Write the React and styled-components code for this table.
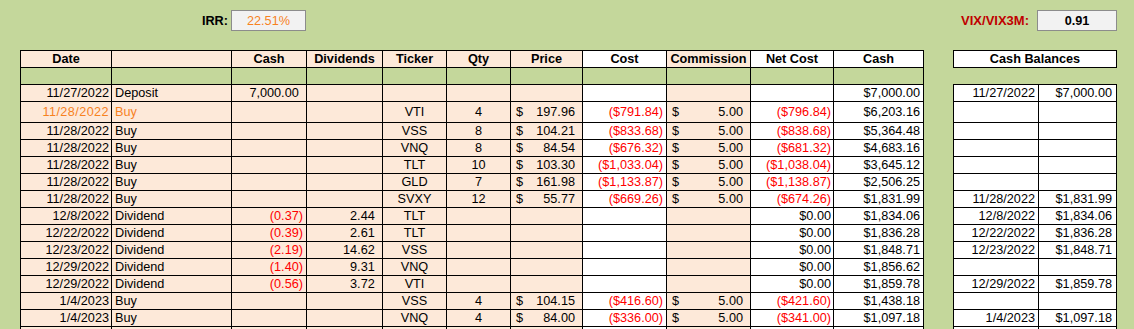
import React from 'react';
import styled, { createGlobalStyle } from 'styled-components';

const GREEN = '#C4D79B';
const PEACH = '#FDE9D9';
const RED = '#FF0000';
const ORANGE = '#F7821F';

const fills = { peach: PEACH, white: '#FFFFFF', green: GREEN };

const columns = [
  { key: 'date', w: 91, fill: 'peach', align: 'right', pr: 2, title: 'Date' },
  { key: 'type', w: 120, fill: 'peach', align: 'left', pl: 3, title: '' },
  { key: 'cash', w: 75, fill: 'peach', align: 'right', pr: 3, paren: true, title: 'Cash' },
  { key: 'div', w: 76, fill: 'peach', align: 'right', pr: 3, paren: true, title: 'Dividends' },
  { key: 'ticker', w: 64, fill: 'peach', align: 'center', title: 'Ticker' },
  { key: 'qty', w: 64, fill: 'peach', align: 'center', title: 'Qty' },
  { key: 'price', w: 72, fill: 'peach', acct: true, title: 'Price' },
  { key: 'cost', w: 84, fill: 'white', align: 'right', pr: 3, title: 'Cost' },
  { key: 'comm', w: 84, fill: 'peach', acct: true, title: 'Commission' },
  { key: 'net', w: 83, fill: 'white', align: 'right', pr: 2, title: 'Net Cost' },
  { key: 'bal', w: 90, fill: 'white', align: 'right', pr: 3, title: 'Cash' },
];

const buy = (date, ticker, qty, price, cost, net, bal, cb, extra = {}) => ({
  date, type: 'Buy', ticker, qty, price, cost, comm: '5.00', net, bal, cb, ...extra,
});

const dividend = (date, cash, div, ticker, bal, cb) => ({
  date, type: 'Dividend', cash, div, ticker, net: '$0.00', bal, cb,
});

const rows = [
  { date: '11/27/2022', type: 'Deposit', cash: '7,000.00', bal: '$7,000.00', cb: ['11/27/2022', '$7,000.00'] },
  buy('11/28/2022', 'VTI', '4', '197.96', '($791.84)', '($796.84)', '$6,203.16', null, { tall: true, flagged: true }),
  buy('11/28/2022', 'VSS', '8', '104.21', '($833.68)', '($838.68)', '$5,364.48'),
  buy('11/28/2022', 'VNQ', '8', '84.54', '($676.32)', '($681.32)', '$4,683.16'),
  buy('11/28/2022', 'TLT', '10', '103.30', '($1,033.04)', '($1,038.04)', '$3,645.12'),
  buy('11/28/2022', 'GLD', '7', '161.98', '($1,133.87)', '($1,138.87)', '$2,506.25'),
  buy('11/28/2022', 'SVXY', '12', '55.77', '($669.26)', '($674.26)', '$1,831.99', ['11/28/2022', '$1,831.99']),
  dividend('12/8/2022', '(0.37)', '2.44', 'TLT', '$1,834.06', ['12/8/2022', '$1,834.06']),
  dividend('12/22/2022', '(0.39)', '2.61', 'TLT', '$1,836.28', ['12/22/2022', '$1,836.28']),
  dividend('12/23/2022', '(2.19)', '14.62', 'VSS', '$1,848.71', ['12/23/2022', '$1,848.71']),
  dividend('12/29/2022', '(1.40)', '9.31', 'VNQ', '$1,856.62', null),
  dividend('12/29/2022', '(0.56)', '3.72', 'VTI', '$1,859.78', ['12/29/2022', '$1,859.78']),
  buy('1/4/2023', 'VSS', '4', '104.15', '($416.60)', '($421.60)', '$1,438.18'),
  buy('1/4/2023', 'VNQ', '4', '84.00', '($336.00)', '($341.00)', '$1,097.18', ['1/4/2023', '$1,097.18']),
  { date: '', type: '' },
];

const GlobalStyle = createGlobalStyle`
  html, body {
    margin: 0;
    padding: 0;
    overflow: hidden;
    background: ${GREEN};
  }
  body {
    font-family: 'Liberation Sans', Arial, sans-serif;
    font-size: 12.7px;
    color: #000;
  }
`;

const Page = styled.div`
  padding: 10px 0 0 20px;
`;

const TopBar = styled.div`
  display: flex;
  height: 21px;
`;

const Label = styled.div`
  width: ${p => p.$w}px;
  box-sizing: border-box;
  padding-right: ${p => p.$pr}px;
  display: flex;
  align-items: center;
  justify-content: flex-end;
  font-weight: bold;
  font-size: ${p => p.$size || 12.7}px;
  color: ${p => p.$color || '#000'};
`;

const ValueBox = styled.div`
  width: ${p => p.$w}px;
  box-sizing: border-box;
  border: 1px solid #8c8c8c;
  background: #f2f2f2;
  display: flex;
  align-items: center;
  justify-content: center;
  color: ${p => p.$color || '#000'};
  font-weight: ${p => (p.$bold ? 'bold' : 'normal')};
`;

const Spacer = styled.div`
  width: ${p => p.$w}px;
`;

const Sheet = styled.div`
  display: flex;
  align-items: flex-start;
  margin-top: 19px;
`;

const Table = styled.div`
  border-left: 1px solid #000;
  border-top: 1px solid #000;
`;

const Row = styled.div`
  display: flex;
  height: ${p => p.$h}px;
  box-sizing: border-box;
  border-bottom: 1px solid #000;
  background: ${p => (p.$green ? GREEN : 'transparent')};
`;

const Cell = styled.div`
  width: ${p => p.$w}px;
  flex: none;
  box-sizing: border-box;
  border-right: 1px solid #000;
  background: ${p => fills[p.$fill]};
  display: flex;
  align-items: flex-end;
  justify-content: ${p =>
    p.$align === 'right' ? 'flex-end' : p.$align === 'center' ? 'center' : p.$acct ? 'space-between' : 'flex-start'};
  padding: 0 ${p => (p.$acct ? 7 : p.$pr || 0)}px ${p => p.$pb}px ${p => (p.$acct ? 5 : p.$pl || 0)}px;
  white-space: nowrap;
  overflow: hidden;
  font-weight: ${p => (p.$head ? 'bold' : 'normal')};
  color: ${p => p.$color || '#000'};
`;

const Wide = styled.span`
  letter-spacing: 0.4px;
`;

const Ghost = styled.span`
  visibility: hidden;
`;

const Balances = styled.div`
  margin-left: 29px;
  width: 164px;
`;

const BalanceHead = styled.div`
  height: 18px;
  box-sizing: border-box;
  border: 1px solid #000;
  background: #fff;
  display: flex;
  align-items: flex-end;
  justify-content: center;
  padding-bottom: 1px;
  font-weight: bold;
`;

const BalanceGap = styled.div`
  height: 17px;
  box-sizing: border-box;
  border-bottom: 1px solid #000;
`;

const BalanceBody = styled.div`
  border-left: 1px solid #000;
`;

const isNeg = v => typeof v === 'string' && v.startsWith('(');

const renderValue = (col, value, row) => {
  if (!value) return null;
  if (col.acct) {
    return (
      <>
        <span>$</span>
        <span>{value}</span>
      </>
    );
  }
  if (row.flagged && col.key === 'date') return <Wide>{value}</Wide>;
  if (col.paren && !isNeg(value)) {
    return (
      <span>
        {value}
        <Ghost>)</Ghost>
      </span>
    );
  }
  return value;
};

const cellColor = (col, value, row) => {
  if (row.flagged && (col.key === 'date' || col.key === 'type')) return ORANGE;
  if (isNeg(value)) return RED;
  return '#000';
};

const HeaderRow = () => (
  <Row $h={17}>
    {columns.map(col => (
      <Cell key={col.key} $w={col.w} $fill={col.fill} $align="center" $pb={1} $head>
        {col.title}
      </Cell>
    ))}
  </Row>
);

const SpacerRow = () => (
  <Row $h={17} $green>
    {columns.map(col => (
      <Cell key={col.key} $w={col.w} $fill="green" />
    ))}
  </Row>
);

const DataRow = ({ row }) => (
  <Row $h={row.tall ? 21 : 17}>
    {columns.map(col => (
      <Cell
        key={col.key}
        $w={col.w}
        $fill={col.fill}
        $align={col.align}
        $acct={col.acct}
        $pr={col.pr}
        $pl={col.pl}
        $pb={row.tall ? 3 : 1}
        $color={cellColor(col, row[col.key], row)}
      >
        {renderValue(col, row[col.key], row)}
      </Cell>
    ))}
  </Row>
);

const BalanceRow = ({ row }) => (
  <Row $h={row.tall ? 21 : 17}>
    <Cell $w={85} $fill="white" $align="right" $pr={3} $pb={row.tall ? 3 : 1}>
      {row.cb ? row.cb[0] : null}
    </Cell>
    <Cell $w={78} $fill="white" $align="right" $pr={4} $pb={row.tall ? 3 : 1}>
      {row.cb ? row.cb[1] : null}
    </Cell>
  </Row>
);

const App = () => (
  <Page>
    <GlobalStyle />
    <TopBar>
      <Label $w={211} $pr={3}>IRR:</Label>
      <ValueBox $w={75} $color={ORANGE}>22.51%</ValueBox>
      <Spacer $w={647} />
      <Label $w={84} $pr={8} $size={13} $color="#C00000">VIX/VIX3M:</Label>
      <ValueBox $w={80} $bold>0.91</ValueBox>
    </TopBar>
    <Sheet>
      <Table>
        <HeaderRow />
        <SpacerRow />
        {rows.map((row, i) => (
          <DataRow key={i} row={row} />
        ))}
      </Table>
      <Balances>
        <BalanceHead>Cash Balances</BalanceHead>
        <BalanceGap />
        <BalanceBody>
          {rows.map((row, i) => (
            <BalanceRow key={i} row={row} />
          ))}
        </BalanceBody>
      </Balances>
    </Sheet>
  </Page>
);

export default App;
